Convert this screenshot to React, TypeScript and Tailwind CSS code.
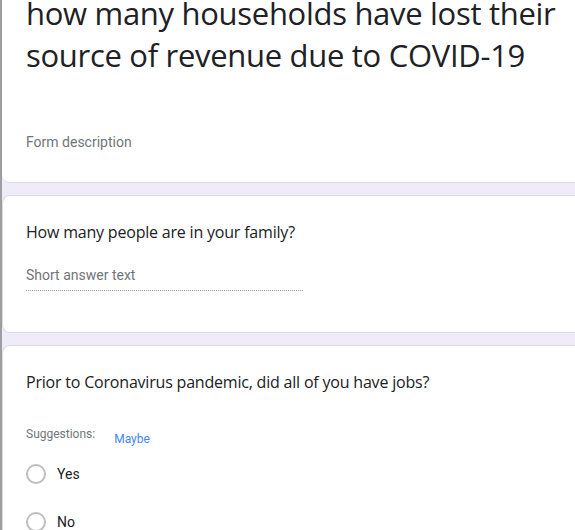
import React from "react";

export default function App() {
  return (
    <div className="relative h-[530px] w-[575px] overflow-hidden bg-[#f0ebf8] border-l-[2px] border-[#9e9e9e]">
      {/* Card 1 */}
      <div className="h-[183px] bg-white rounded-bl-lg border-b border-[#dadce0] pl-[24px] overflow-hidden">
        <div className="-mt-[8px] whitespace-nowrap text-[31px] leading-[42px] tracking-[-0.3px] text-[#202124] font-['Open_Sans',sans-serif]">
          <div>how many households have lost their</div>
          <div>source of revenue due to COVID-19</div>
        </div>
        <div className="mt-[56px] text-[14px] leading-[20px] text-[#70757a] font-['Roboto',sans-serif]">Form description</div>
      </div>

      {/* Card 2 */}
      <div className="mt-[12px] h-[138px] bg-white rounded-l-lg border border-r-0 border-[#dadce0] pl-[23px] pt-[24px]">
        <div className="text-[16px] leading-[24px] tracking-[-0.2px] text-[#202124] font-['Open_Sans',sans-serif]">How many people are in your family?</div>
        <div className="mt-[21px] w-[277px] border-b border-dotted border-[#9aa0a6] pb-[5px] text-[14px] leading-[20px] text-[#70757a] font-['Roboto',sans-serif]">Short answer text</div>
      </div>

      {/* Card 3 */}
      <div className="mt-[12px] h-[200px] bg-white rounded-l-lg border border-r-0 border-[#dadce0] pl-[23px] pt-[24px]">
        <div className="text-[16px] leading-[24px] tracking-[-0.2px] text-[#202124] font-['Open_Sans',sans-serif]">Prior to Coronavirus pandemic, did all of you have jobs?</div>
        <div className="mt-[32px] flex items-start gap-[19px] font-['Roboto',sans-serif]">
          <span className="text-[12px] leading-[16px] text-[#70757a]">Suggestions:</span>
          <span className="mt-[5px] text-[12px] leading-[16px] text-[#4285f4]">Maybe</span>
        </div>
        <div className="mt-[17px] flex items-center gap-[11px] font-['Roboto',sans-serif]">
          <span className="block h-[20px] w-[20px] rounded-full border-2 border-[#bdbdbd]" />
          <span className="text-[14px] leading-[20px] text-[#202124]">Yes</span>
        </div>
        <div className="mt-[28px] flex items-center gap-[11px] font-['Roboto',sans-serif]">
          <span className="block h-[20px] w-[20px] rounded-full border-2 border-[#bdbdbd]" />
          <span className="text-[14px] leading-[20px] text-[#202124]">No</span>
        </div>
      </div>
    </div>
  );
}
